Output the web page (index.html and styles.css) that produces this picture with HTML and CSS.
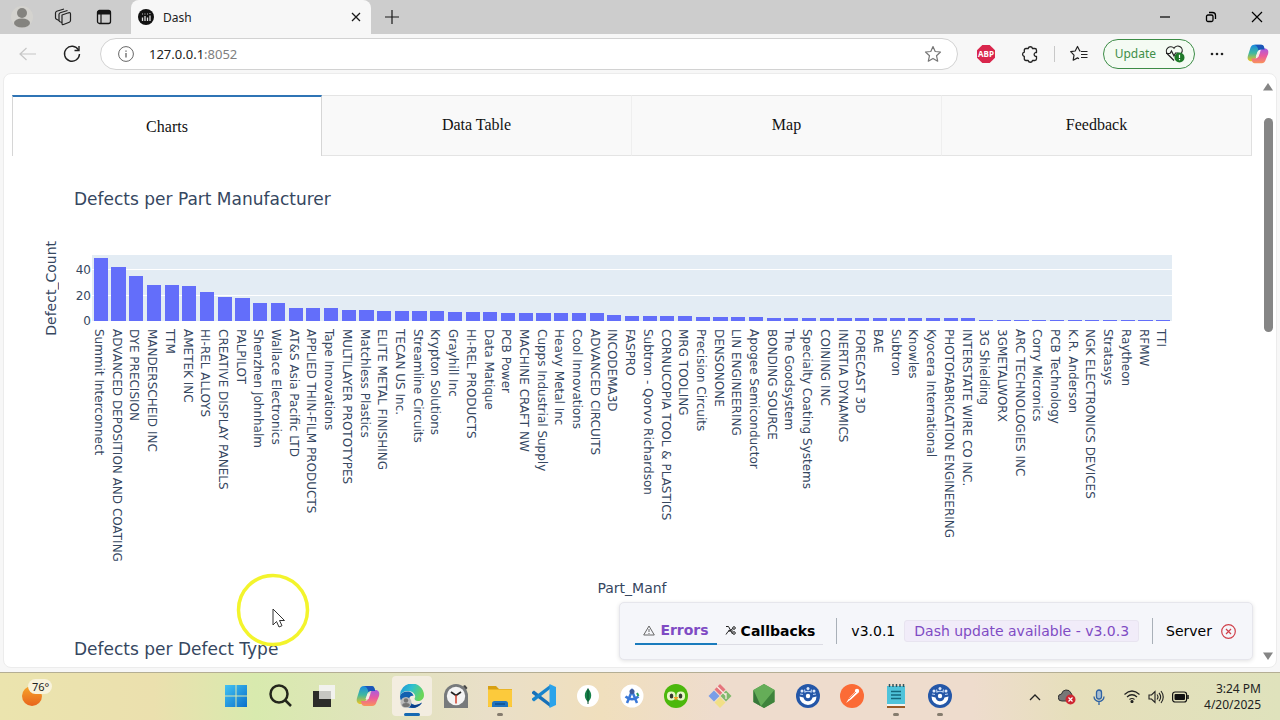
FILE: index.html
```html
<!DOCTYPE html>
<html lang="en">
<head>
    <meta charset="UTF-8">
    <meta name="viewport" content="width=device-width, initial-scale=1.0">
    <title>Dash</title>
    <link rel="stylesheet" href="styles.css">
</head>
<body>
    <svg class="defs" aria-hidden="true">
        <linearGradient id="cpA" x1="0" y1="0" x2="0" y2="1"><stop offset="0" stop-color="#1a8be0"/><stop offset=".5" stop-color="#3fb8a0"/><stop offset="1" stop-color="#f2c51d"/></linearGradient>
        <linearGradient id="cpB" x1="0" y1="0" x2="0" y2="1"><stop offset="0" stop-color="#a85be0"/><stop offset=".5" stop-color="#ea5aa0"/><stop offset="1" stop-color="#f9935a"/></linearGradient>
        <linearGradient id="win" x1="0" y1="0" x2="1" y2="1"><stop offset="0" stop-color="#42c3f3"/><stop offset="1" stop-color="#0a6fcb"/></linearGradient>
        <linearGradient id="edge" x1="0" y1="0" x2="1" y2=".4"><stop offset="0" stop-color="#1c8fd8"/><stop offset=".5" stop-color="#2fc0cf"/><stop offset="1" stop-color="#6ad65a"/></linearGradient>
        <linearGradient id="sun" x1="0" y1="0" x2="0" y2="1"><stop offset="0" stop-color="#f6a52a"/><stop offset="1" stop-color="#e8641c"/></linearGradient>
        <symbol id="copilot" viewBox="0 0 24 24">
            <path d="M8 2h7.500c2 0 2.600 1 3.200 3l.6 2H15c-2 0-3 1-3.500 3l-2 7c-.6 2-1.500 3-3.500 3H4.500C1.500 20 0 17.500 1 14L3.500 6C4.200 3.500 5.500 2 8 2z" fill="url(#cpA)"/>
            <path d="M16 22H8.500c-2 0-2.600-1-3.200-3l-.3-2H9c2 0 3-1 3.500-3l2-5c.6-2 1.500-3 3.500-3h1.500c3 0 4.500 2.500 3.500 6l-2.500 6c-.7 2.500-2 4-4.500 4z" fill="url(#cpB)"/>
            <path d="M8 2h7.500c2 0 2.600 1 3.200 3l.5 2H15c-1 0-2 .3-2.600 1.200C12 5 10.500 2.500 8 2z" fill="#1c55b8"/>
            <path d="M11.500 9.500h3l-2 5.500h-3z" fill="#f6ece6"/>
        </symbol>
        <symbol id="wheel" viewBox="0 0 24 24">
            <circle cx="12" cy="12" r="12" fill="#2457a8"/>
            <path d="M3.500 12.500a8.500 8.500 0 0 0 17 0l-4 1a4.600 4.600 0 0 1-9 0z" fill="#fff"/>
            <circle cx="12" cy="12" r="2.200" fill="#fff"/>
            <circle cx="12" cy="4.500" r="1.500" fill="#dce8fa"/>
            <circle cx="6" cy="7" r="1.500" fill="#dce8fa"/>
            <circle cx="18" cy="7" r="1.500" fill="#dce8fa"/>
            <path d="M4 10l3 .5M20 10l-3 .5M8.500 5.500l.5 2.500q3-1.500 6 0l.5-2.500" fill="none" stroke="#b9d0f2" stroke-width="1.200"/>
        </symbol>
    </svg>

    <header class="titlebar">
        <button class="title-btn" aria-label="Profile">
            <svg width="24" height="24" viewBox="0 0 24 24"><circle cx="12" cy="12" r="11" fill="#d4d3cf"/><circle cx="12" cy="8" r="5" fill="#84837f"/><ellipse cx="12" cy="18" rx="8" ry="4.500" fill="#84837f"/></svg>
        </button>
        <button class="title-btn" aria-label="Workspaces">
            <svg width="18" height="18" viewBox="0 0 18 18" fill="none" stroke="#222" stroke-width="1.200" stroke-linejoin="round"><path d="M8 7l6.500-2.200q2-.5 2 1.200v6.500q0 1.200-1.200 1.700L9.500 16.500Q8 17 8 15.300z"/><path d="M8 14.500l-2-.8q-1-.5-1-1.500V6.500q0-1.200 1.200-1.700L13.500 2.500"/><path d="M5 12.500l-2.500-1.200q-1-.5-1-1.500V5q0-1.200 1.200-1.700L10 1"/></svg>
        </button>
        <button class="title-btn" aria-label="Tab actions">
            <svg width="16" height="16" viewBox="0 0 16 16"><rect x="1.500" y="1.500" width="13" height="13" rx="2" fill="none" stroke="#151515" stroke-width="1.300"/><path d="M1.500 2h13v3.500h-13z" fill="#151515"/><path d="M5 5v9.500" stroke="#151515" stroke-width="1.200"/></svg>
        </button>
        <div class="browser-tab">
            <svg width="16" height="16" viewBox="0 0 16 16"><circle cx="8" cy="8" r="8" fill="#111"/><path d="M4.500 12V8.500M7 12V7M9.500 12V8.500M12 12V6.500" stroke="#ddd" stroke-width="1.300"/><path d="M4 5h.9M6.500 5h.9M9 5h.9M11.500 4.500h.9" stroke="#ddd" stroke-width="1"/></svg>
            <span class="tab-name">Dash</span>
            <button class="plain" aria-label="Close tab"><svg width="10" height="10" viewBox="0 0 10 10" stroke="#1a1a1a" stroke-width="1.300"><path d="M1 1l8 8M9 1l-8 8"/></svg></button>
        </div>
        <button class="plain new-tab" aria-label="New tab"><svg width="14" height="14" viewBox="0 0 14 14" stroke="#1a1a1a" stroke-width="1.200"><path d="M7 0v14M0 7h14"/></svg></button>
        <div class="window-btns">
            <button class="plain" aria-label="Minimize"><svg width="12" height="12" viewBox="0 0 12 12" stroke="#000" stroke-width="1.200"><path d="M1 6h10"/></svg></button>
            <button class="plain" aria-label="Restore"><svg width="12" height="12" viewBox="0 0 12 12" fill="none" stroke="#000" stroke-width="1.300"><rect x="1.500" y="4" width="6.500" height="6.500" rx="1.500"/><path d="M4 1.500h3.500q3 0 3 3V8"/></svg></button>
            <button class="plain" aria-label="Close"><svg width="12" height="12" viewBox="0 0 12 12" stroke="#000" stroke-width="1.200"><path d="M1 1l10 10M11 1L1 11"/></svg></button>
        </div>
    </header>

    <nav class="toolbar">
        <button class="plain tool-back" aria-label="Back"><svg width="18" height="14" viewBox="0 0 18 14" fill="none" stroke="#c6c6c6" stroke-width="1.200"><path d="M17 7H1M7.500 1L1 7l6.500 6"/></svg></button>
        <button class="plain tool-reload" aria-label="Reload"><svg width="18" height="18" viewBox="0 0 18 18" fill="none" stroke="#222" stroke-width="1.400"><path d="M15.500 5A7.500 7.500 0 1 0 16.500 9"/><path d="M16 1v4.500h-4.500"/></svg></button>
        <div class="address">
            <svg width="16" height="16" viewBox="0 0 16 16" fill="none" stroke="#666" stroke-width="1"><circle cx="8" cy="8" r="7.400"/><path d="M8 7v4.500M8 4.500v1.200" stroke-width="1.300"/></svg>
            <span class="url" role="textbox" aria-label="Address">127.0.0.1<span>:8052</span></span>
            <svg width="18" height="18" viewBox="0 0 18 18" fill="none" stroke="#777" stroke-width="1.200" stroke-linejoin="round"><path d="M9 1.500l2.200 5 5.300.5-4 3.700 1.200 5.500L9 13.400l-4.700 2.800 1.200-5.500-4-3.700 5.300-.5z"/></svg>
        </div>
        <button class="plain abp" aria-label="Adblock Plus"><svg width="18" height="18" viewBox="0 0 18 18"><path d="M5.300 0h7.400L18 5.300v7.400L12.700 18H5.300L0 12.700V5.300z" fill="#d9264c"/><text x="9" y="12" text-anchor="middle" class="abp-text">ABP</text></svg></button>
        <button class="plain puzzle" aria-label="Extensions"><svg width="18" height="18" viewBox="0 0 18 18" fill="none" stroke="#222" stroke-width="1.300" stroke-linejoin="round"><path d="M5 3.500h2.200a2.200 2.200 0 0 1 4.300 0h2.300q1.700 0 1.700 1.700v2.300h-1a2 2 0 0 0 0 3.800h1v2.500q0 1.700-1.700 1.700h-2.300a2.200 2.200 0 0 1-4.300 0H5q-1.700 0-1.700-1.700v-2.300a2.200 2.200 0 0 1 0-4.300V5.200Q3.300 3.500 5 3.500z"/></svg></button>
        <span class="tool-sep"></span>
        <button class="plain favs" aria-label="Favorites"><svg width="18" height="18" viewBox="0 0 18 18" fill="none" stroke="#222" stroke-width="1.200" stroke-linejoin="round"><path d="M10.500 6.200L9.800 6 7.500 1.500 5.200 6l-4.500.7L4 10.200l-.8 5 4.300-2.300 1.500.8M11 6.500h6.500M11 9.500h6.500M11 12.500h6.500"/></svg></button>
        <button class="update">Update
            <svg width="20" height="18" viewBox="0 0 20 18" fill="none" stroke="#222" stroke-width="1.200"><path d="M9 15.500L2.500 9A4.300 4.300 0 0 1 9 3.200 4.300 4.300 0 0 1 16.500 8"/><path d="M1 8.500h4l1.500-2.500L9 11l1.500-3h3"/><circle cx="14.500" cy="12.500" r="5" fill="#1e7a28" stroke="none"/><path d="M14.500 9.700v3.200M14.500 14v1.300" stroke="#fff"/></svg>
        </button>
        <button class="plain dots" aria-label="More"><svg width="14" height="4" viewBox="0 0 14 4" fill="#222"><circle cx="2" cy="2" r="1.300"/><circle cx="7" cy="2" r="1.300"/><circle cx="12" cy="2" r="1.300"/></svg></button>
        <button class="plain" aria-label="Copilot"><svg width="22" height="22"><use href="#copilot"/></svg></button>
    </nav>

    <div class="viewport">
        <main class="page">
            <div class="tabs" role="tablist">
                <button class="tab selected" role="tab">Charts</button>
                <button class="tab" role="tab">Data Table</button>
                <button class="tab" role="tab">Map</button>
                <button class="tab" role="tab">Feedback</button>
            </div>

            <section class="graph">
                <h2>Defects per Part Manufacturer</h2>
                <div class="chart">
                    <div class="y-title">Defect_Count</div>
                    <div class="y-ticks"><span>40</span><span>20</span><span>0</span></div>
                    <div class="bars" id="bars"></div>
                    <div class="labels" id="labels"></div>
                </div>
                <div class="x-title">Part_Manf</div>
            </section>

            <section class="graph">
                <h2>Defects per Defect Type</h2>
            </section>
        </main>

        <div class="scrollbar">
            <svg width="10" height="8" viewBox="0 0 10 8"><path d="M5 0l5 7.500H0z" fill="#858585"/></svg>
            <div class="thumb"></div>
            <svg width="10" height="8" viewBox="0 0 10 8"><path d="M5 8L0 .5h10z" fill="#858585"/></svg>
        </div>

        <div class="debug-menu">
            <button class="debug-tab active">
                <svg width="12" height="11" viewBox="0 0 12 11" fill="none" stroke="#666" stroke-width="1"><path d="M6 1l5.300 9H.7z"/><path d="M6 4v3M6 8v1"/></svg>
                Errors
            </button>
            <button class="debug-tab">
                <svg width="11" height="11" viewBox="0 0 11 11" fill="none" stroke="#222" stroke-width="1"><path d="M1 1.500h2.500L7.500 9M1 9.500l2-3 5-3"/><circle cx="9" cy="3" r="1.300"/><circle cx="9" cy="8" r="1.300"/><path d="M3 6h5"/></svg>
                Callbacks
            </button>
            <span class="debug-sep"></span>
            <span class="version">v3.0.1</span>
            <a class="upgrade" href="#">Dash update available - v3.0.3</a>
            <span class="debug-sep"></span>
            <span class="server">Server</span>
            <svg width="15" height="15" viewBox="0 0 15 15" fill="none" stroke="#d0404a" stroke-width="1.200"><circle cx="7.500" cy="7.500" r="6.800"/><path d="M5 5l5 5M10 5l-5 5"/></svg>
        </div>
    </div>

    <footer class="taskbar">
        <div class="weather">
            <svg width="20" height="20" viewBox="0 0 20 20"><circle cx="10" cy="10" r="10" fill="url(#sun)"/></svg>
            <span>76°</span>
        </div>
        <div class="apps">
            <button aria-label="Start"><svg width="24" height="24" viewBox="0 0 24 24" fill="url(#win)"><path d="M1 1h10.500v10.500H1zM12.500 1H23v10.500H12.500zM1 12.500h10.500V23H1zM12.500 12.500H23V23H12.500z"/></svg></button>
            <button aria-label="Search"><svg width="24" height="24" viewBox="0 0 24 24" fill="none" stroke="#23261c" stroke-width="2.500"><circle cx="11" cy="10" r="8.500"/><path d="M17 16l6 6"/></svg></button>
            <button aria-label="Task view"><svg width="24" height="24" viewBox="0 0 24 24"><path d="M1 7h18v16H1z" fill="#2c2c2a"/><path d="M7 1h16v14H7z" fill="#f2f2ee"/><path d="M7 7h12v8H7z" fill="#c6c6c2"/></svg></button>
            <button aria-label="Copilot"><svg width="24" height="24"><use href="#copilot"/></svg></button>
            <button class="current" aria-label="Edge"><svg width="24" height="24" viewBox="0 0 24 24"><path d="M0 12A12 12 0 0 1 24 11c0 4-3 6-6 6-3.500 0-4-2-3-3.500C16 11 13 7 8 7 4 7 1 9 0 12z" fill="url(#edge)"/><path d="M0 12c1-3 4-4.500 7-4.500 4 0 6 2 6.500 4.500C9 11 8 16 11 19c3 3 8 2.500 11-.5C20 22 16 24 12 24 5 24 0 18.500 0 12z" fill="#1260b0"/><path d="M11 11.500c-5 2-3 8 1 9 3 1 7 0 10-2-3 5.500-9 6-12 4.500-5-3-4-10 1-11.500z" fill="#0d418c"/><circle cx="6" cy="18.500" r="5.500" fill="#bbb"/><circle cx="6" cy="16.500" r="2.200" fill="#747474"/><ellipse cx="6" cy="21" rx="3.800" ry="2" fill="#747474"/></svg></button>
            <button aria-label="Clock"><svg width="24" height="24" viewBox="0 0 24 24"><path d="M0 24V12a12 12 0 0 1 24 0v12z" fill="#777a7c"/><path d="M19 2l2-1 2.500 3-1.500 1.500z" fill="#444"/><circle cx="12" cy="12" r="9.200" fill="#f4f4f4"/><path d="M7 8l5 3.500L17 8" stroke="#222" stroke-width="1.800" fill="none"/><path d="M12 11v8.500" stroke="#d2402e" stroke-width="1.500"/></svg></button>
            <button class="running" aria-label="File Explorer"><svg width="26" height="24" viewBox="0 0 26 24"><path d="M1 2h8l3 3h13v18H1z" fill="#d8a012"/><path d="M1 5.500h24V22q0 1-1 1H2q-1 0-1-1z" fill="#fcca3c"/><path d="M5 23v-3.500q0-2.500 2.500-2.500h11q2.500 0 2.500 2.500V23z" fill="#1f73c0"/><path d="M8 20h10" stroke="#124f8c" stroke-width="1.500"/></svg></button>
            <button aria-label="Visual Studio Code"><svg width="24" height="24" viewBox="0 0 24 24"><path d="M0 8l2-1.500L18 19v4L0 9.500z" fill="#1770b8"/><path d="M0 16l2 1.500L18 5V1L0 14.500z" fill="#1884cc"/><path d="M17.500 0L24 3v18l-6.500 3z" fill="#2ba3ea"/></svg></button>
            <button aria-label="MongoDB"><svg width="24" height="24" viewBox="0 0 24 24"><circle cx="12" cy="12" r="11" fill="#fff"/><path d="M12 4.500c4.500 4.500 4 10 0 13.500-4-3.500-4.500-9 0-13.500z" fill="#17824a"/><path d="M12 4.500V20" stroke="#0a4a2c"/></svg></button>
            <button aria-label="Android Studio"><svg width="24" height="24" viewBox="0 0 24 24"><circle cx="12" cy="12" r="11.500" fill="#fff"/><path d="M7 19l5-12 5 12M5.500 12.500Q12 18 18.500 12.500" fill="none" stroke="#3978d8" stroke-width="2.500"/><circle cx="12" cy="7.500" r="2.500" fill="#3d5b9c"/><path d="M17 9l1.500 3" stroke="#2b9a5c" stroke-width="2"/></svg></button>
            <button aria-label="Duolingo"><svg width="24" height="24" viewBox="0 0 24 24"><circle cx="12" cy="12" r="12" fill="#4cb80c"/><rect x="3" y="7.500" width="8.500" height="9" rx="4" fill="#e9f7c8"/><rect x="12.500" y="7.500" width="8.500" height="9" rx="4" fill="#e9f7c8"/><ellipse cx="7.500" cy="12" rx="1.800" ry="2.600" fill="#333b30"/><ellipse cx="16.500" cy="12" rx="1.800" ry="2.600" fill="#333b30"/><path d="M9.500 13h5L12 16.500z" fill="#f39a22"/></svg></button>
            <button aria-label="Git"><svg width="24" height="24" viewBox="0 0 24 24"><path d="M12 0l5.500 5.500L12 11 6.500 5.500z" fill="#e5747c"/><path d="M6 6.500l5.500 5.500L6 17.500.5 12z" fill="#799ee8"/><path d="M18 6.500l5.500 5.500-5.500 5.500-5.500-5.500z" fill="#80b96c"/><path d="M12 13l5.500 5.500L12 24l-5.500-5.500z" fill="#f1df86"/><path d="M9 2.500l9 9M18 9v6" stroke="#f7e9e0" stroke-width="1.300"/></svg></button>
            <button aria-label="Node.js"><svg width="24" height="24" viewBox="0 0 24 24"><path d="M12 0l10.500 6v12L12 24 1.500 18V6z" fill="#51994b"/><path d="M12 0l10.500 6L9 22.200 1.500 18V6z" fill="#65ad58"/><path d="M22.500 6v12L12 24l-3-1.800z" fill="#3f833c"/><path d="M1.500 6L9 22.200 1.500 18z" fill="#38763a"/></svg></button>
            <button aria-label="Cluster"><svg width="24" height="24"><use href="#wheel"/></svg></button>
            <button aria-label="Postman"><svg width="24" height="24" viewBox="0 0 24 24"><circle cx="12" cy="12" r="12" fill="#fb6b36"/><path d="M6 19l4-6 6-6 2 2-6.500 6z" fill="#fff"/><circle cx="17" cy="7" r="2.200" fill="#fff"/><path d="M9 15l7-7" stroke="#fb6b36" stroke-width=".8"/></svg></button>
            <button class="running" aria-label="Notepad"><svg width="24" height="24" viewBox="0 0 24 24"><path d="M3 2h18v19H3z" fill="#4fc3da"/><path d="M3 21h18v3H3z" fill="#9b5a25"/><path d="M3 20h18v2H3z" fill="#f4f4f0"/><path d="M5.500 0v3M9 0v3M12.500 0v3M16 0v3M19.500 0v3" stroke="#34535c" stroke-width="1.500"/><path d="M7 7.500h10M7 11h10M7 14.500h10" stroke="#14687d" stroke-width="1.300"/></svg></button>
            <button class="running" aria-label="Cluster"><svg width="24" height="24"><use href="#wheel"/></svg></button>
        </div>
        <div class="tray">
            <svg width="12" height="8" viewBox="0 0 12 8" fill="none" stroke="#222" stroke-width="1.300"><path d="M1 7l5-5 5 5"/></svg>
            <svg width="18" height="16" viewBox="0 0 18 16"><path d="M4 12a3.500 3.500 0 0 1-.5-7A5 5 0 0 1 13 4l1 2-6 6z" fill="#777" stroke="#333"/><circle cx="12.500" cy="10.500" r="5" fill="#cf2631"/><path d="M10.500 8.500l4 4M14.500 8.500l-4 4" stroke="#fff" stroke-width="1.200"/></svg>
            <svg width="12" height="16" viewBox="0 0 12 16" fill="none" stroke="#2f62a3" stroke-width="1.300"><rect x="3.500" y="1" width="5" height="9" rx="2.500" fill="#a6bdd0"/><path d="M1 7.500a5 5 0 0 0 10 0M6 12.500V16"/></svg>
            <span class="status">
                <svg width="16" height="13" viewBox="0 0 16 13" fill="none" stroke="#222" stroke-width="1.200"><path d="M.5 4.500q7.500-7 15 0M3 7q5-4.500 10 0M5.500 9.500q2.500-2 5 0"/><circle cx="8" cy="11.500" r="1" fill="#222"/></svg>
                <svg width="16" height="14" viewBox="0 0 16 14" fill="none" stroke="#222" stroke-width="1.100"><path d="M1 5v4h2.500L7 12.500v-11L3.500 5zM9 4.500q2 2.500 0 5M11 2.800q3.300 4.200 0 8.400M13 1q4.500 6 0 12"/></svg>
                <svg width="17" height="12" viewBox="0 0 17 12"><rect x=".6" y="1" width="14" height="10" rx="2.500" fill="none" stroke="#111" stroke-width="1.200"/><rect x="2.500" y="3" width="10.500" height="6" rx="1" fill="#111"/><path d="M16 4v4" stroke="#111" stroke-width="1.500"/></svg>
            </span>
            <time class="clock">3:24 PM<br>4/20/2025</time>
        </div>
    </footer>

    <svg class="pointer" width="74" height="74" viewBox="0 0 74 74" aria-hidden="true"><circle cx="37" cy="37" r="34.500" fill="none" stroke="#f3f42c" stroke-width="3.500"/><path d="M37 36v16l3.500-3.500 2.500 5.500 3-1.300-2.500-5.200h5z" fill="#fff" stroke="#333" stroke-width="1"/></svg>

    <script>
const defects = [
    ['Summit Interconnect', 49], ['ADVANCED DEPOSITION AND COATING', 42], ['DYE PRECISION', 35],
    ['MANDERSCHEID INC', 28], ['TTM', 28], ['AMETEK INC', 27], ['HI-REL ALLOYS', 23],
    ['CREATIVE DISPLAY PANELS', 19], ['PALPILOT', 18], ['Shenzhen Johnhalm', 14],
    ['Wallace Electronics', 14], ['AT&S Asia Pacific LTD', 10], ['APPLIED THIN-FILM PRODUCTS', 10],
    ['Tape Innovations', 10], ['MULTILAYER PROTOTYPES', 9], ['Matchless Plastics', 9],
    ['ELITE METAL FINISHING', 8], ['TECAN US Inc.', 8], ['Streamline Circuits', 8],
    ['Krypton Solutions', 8], ['Grayhill Inc', 7], ['HI-REL PRODUCTS', 7], ['Data Matique', 7],
    ['PCB Power', 6], ['MACHINE CRAFT NW', 6], ['Cupps Industrial Supply', 6],
    ['Heavy Metal Inc', 6], ['Cool Innovations', 6], ['ADVANCED CIRCUITS', 6], ['INCODEMA3D', 5],
    ['FASPRO', 4], ['Subtron - Qorvo Richardson', 4], ['CORNUCOPIA TOOL & PLASTICS', 4],
    ['MRG TOOLING', 4], ['Precision Circuits', 3], ['DENSONONE', 3], ['LIN ENGINEERING', 3],
    ['Apogee Semiconductor', 3], ['BONDING SOURCE', 2], ['The Goodsystem', 2],
    ['Specialty Coating Systems', 2], ['COINING INC', 2], ['INERTIA DYNAMICS', 2],
    ['FORECAST 3D', 2], ['BAE', 2], ['Subtron', 2], ['Knowles', 2], ['Kyocera International', 2],
    ['PHOTOFABRICATION ENGINEERING', 2], ['INTERSTATE WIRE CO INC.', 2], ['3G Shielding', 1],
    ['3GMETALWORX', 1], ['ARC TECHNOLOGIES INC', 1], ['Corry Micronics', 1],
    ['PCB Technology', 1], ['K.R. Anderson', 1], ['NGK ELECTRONICS DEVICES', 1],
    ['Stratasys', 1], ['Raytheon', 1], ['RFMW', 1], ['TTI', 1]
];
const yMax = 51.6;
const bars = document.getElementById('bars');
const labels = document.getElementById('labels');

defects.forEach(([name, count]) => {
    const bar = document.createElement('div');
    bar.className = 'bar';
    bar.style.height = (count / yMax * 100) + '%';
    bars.appendChild(bar);

    const label = document.createElement('span');
    label.textContent = name;
    labels.appendChild(label);
});
    </script>
</body>
</html>
```
FILE: styles.css
```css
* {
    margin: 0;
    padding: 0;
    box-sizing: border-box;
}

body {
    height: 100vh;
    display: flex;
    flex-direction: column;
    overflow: hidden;
    background: #f7f7f7;
    font-family: "Noto Sans", sans-serif;
    font-size: 12px;
    color: #222;
}

button {
    border: none;
    background: none;
    font: inherit;
    color: inherit;
}

svg {
    display: block;
    flex: none;
}

.defs {
    position: absolute;
    width: 0;
    height: 0;
}

.plain {
    display: flex;
    align-items: center;
    justify-content: center;
}

/* browser chrome */
.titlebar {
    display: flex;
    align-items: center;
    height: 34px;
    background: #cdcdcd;
    padding-left: 1px;
}

.title-btn {
    width: 41px;
    display: flex;
    justify-content: center;
}

.browser-tab {
    width: 240px;
    height: 34px;
    margin-left: 7px;
    padding: 0 10px 0 7px;
    display: flex;
    align-items: center;
    gap: 9px;
    background: #f7f7f7;
    border-radius: 8px 8px 0 0;
}

.tab-name {
    flex: 1;
}

.new-tab {
    margin-left: 14px;
}

.window-btns {
    margin-left: auto;
    margin-right: 17px;
    display: flex;
    gap: 34px;
}

.toolbar {
    display: flex;
    align-items: center;
    height: 39px;
    padding: 0 11px 0 19px;
}

.tool-reload {
    margin: 0 19px 0 26px;
}

.address {
    flex: 1;
    height: 32px;
    display: flex;
    align-items: center;
    padding: 0 15px 0 17px;
    border: 1px solid #d2d2d2;
    border-radius: 16px;
    background: #fff;
}

.url {
    flex: 1;
    margin-left: 15px;
    font-size: 13px;
}

.url span {
    color: #808080;
}

.abp {
    margin-left: 19px;
}

.abp-text {
    font: bold 8px "Open Sans", sans-serif;
    fill: #fff;
}

.puzzle {
    margin-left: 26px;
}

.tool-sep {
    width: 1px;
    height: 16px;
    margin: 0 15px;
    background: #c8c8c8;
}

.update {
    display: flex;
    align-items: center;
    gap: 9px;
    height: 30px;
    margin: 0 15px;
    padding: 0 9px 0 11px;
    border: 1px solid #3c8c46;
    border-radius: 15px;
    background: #f4fbf3;
    color: #3f8f48;
}

.dots {
    margin-right: 23px;
}

/* page area */
.viewport {
    position: relative;
    flex: 1;
    min-height: 0;
    display: flex;
    margin: 0 3px 4px;
    overflow: hidden;
    background: #fff;
    border: 1px solid #ececec;
    border-radius: 8px;
}

.page {
    flex: 1;
    min-width: 0;
    padding: 21px 8px 0;
}

.tabs {
    display: grid;
    grid-template-columns: repeat(4, 1fr);
    height: 61px;
}

.tab {
    padding-bottom: 2px;
    border: 1px solid #e4e4e4;
    border-left-width: 0;
    border-right-color: #efefef;
    background: #f9f9f9;
    font-family: "Liberation Serif", serif;
    font-size: 16px;
    color: #111;
}

.tab:last-child {
    border-right-color: #e0e0e0;
}

.tab.selected {
    padding: 1px 0 0;
    border-color: #d6d6d6;
    border-left-width: 1px;
    border-top: 2px solid #2f74b5;
    border-bottom: none;
    background: #fff;
}

.graph {
    height: 450px;
    padding: 31px 0 0 31px;
    font-family: Verdana, "DejaVu Sans", sans-serif;
    color: #36475f;
}

.graph h2 {
    margin-left: 31px;
    font-size: 17px;
    font-weight: normal;
    line-height: 24px;
}

.chart {
    display: grid;
    grid-template-columns: 16px 31px 1fr;
    grid-template-rows: 66px auto;
    column-gap: 1px;
    margin: 44px 80px 0 0;
}

.y-title {
    align-self: center;
    margin: -15px 0;
    writing-mode: vertical-rl;
    transform: rotate(180deg);
    font-size: 14px;
    line-height: 16px;
    text-align: center;
}

.y-ticks {
    display: flex;
    flex-direction: column;
    justify-content: space-between;
    height: 65px;
    margin-top: 8px;
    line-height: 14px;
    text-align: right;
}

.bars,
.labels {
    display: grid;
    grid-template-columns: repeat(61, 1fr);
}

.bars {
    align-items: end;
    background:
        linear-gradient(#fff, #fff) 0 14px / 100% 1px no-repeat,
        linear-gradient(#fff, #fff) 0 40px / 100% 1px no-repeat,
        #e3ecf4;
}

.bar {
    margin: 0 10%;
    background: #636efa;
}

.labels {
    grid-column: 3;
    min-height: 257px;
    padding-top: 8px;
}

.labels span {
    justify-self: start;
    writing-mode: vertical-rl;
    white-space: nowrap;
    line-height: 14px;
}

.x-title {
    margin-right: 31px;
    font-size: 14px;
    line-height: 20px;
    text-align: center;
}

.scrollbar {
    width: 16px;
    padding: 9px 0 7px;
    display: flex;
    flex-direction: column;
    align-items: center;
}

.thumb {
    width: 9px;
    height: 214px;
    margin: 27px 0 auto;
    border-radius: 5px;
    background: #858585;
}

/* dash dev tools */
.debug-menu {
    position: absolute;
    right: 23px;
    bottom: 7px;
    display: flex;
    align-items: center;
    height: 58px;
    padding: 0 16px 0 15px;
    border: 1px solid #e6e6ec;
    border-radius: 5px;
    background: #f5f6fa;
    box-shadow: 0 1px 4px rgba(0, 0, 0, 0.12);
    font-family: Verdana, "DejaVu Sans", sans-serif;
    font-size: 14px;
    color: #000;
}

.debug-tab {
    display: flex;
    align-items: center;
    gap: 5px;
    height: 28px;
    padding: 0 8px;
    border-bottom: 1px solid #dcdce4;
    font-weight: bold;
}

.debug-tab.active {
    border-bottom: 2px solid #1a7bbd;
    color: #7f4bc4;
}

.debug-sep {
    width: 1px;
    height: 26px;
    margin: 0 13px;
    background: #a9b0b8;
}

.upgrade {
    margin-left: 9px;
    padding: 0 9px;
    border: 1px solid #e8e4f0;
    border-radius: 3px;
    background: #f1ecf9;
    color: #7f4bc4;
    line-height: 20px;
    text-decoration: none;
}

.version {
    margin-left: 1px;
}

.server {
    margin-right: 9px;
}

/* windows taskbar */
.taskbar {
    display: flex;
    height: 48px;
    border-top: 1px solid #b4ae94;
    background: linear-gradient(90deg, #ebe4ae, #ebe0ae 12%, #d8eaae 20%, #dfe4ba 28%, #e9dfc8 38%, #f0dfbd 47%, #eedccd 56%, #eedccd 76%, #e6dfbb 84%, #dfe2bc);
}

.weather {
    position: relative;
    width: 216px;
    padding: 13px 22px;
}

.weather span {
    position: absolute;
    left: 28px;
    top: 6px;
    padding: 0 3px 0 4px;
    border-radius: 8px;
    background: #f8f3dc;
    font-size: 11px;
    line-height: 15px;
}

.apps {
    display: flex;
    gap: 4px;
    padding: 3px 0 4px;
}

.apps button {
    position: relative;
    width: 40px;
    display: flex;
    align-items: center;
    justify-content: center;
    border-radius: 4px;
}

.apps .current {
    background: #f3ede0;
}

.apps .current::after,
.apps .running::after {
    content: "";
    position: absolute;
    bottom: 0;
    width: 6px;
    height: 3px;
    border-radius: 2px;
    background: #857c6e;
}

.apps .current::after {
    width: 16px;
    background: #1669b2;
}

.tray {
    display: flex;
    align-items: center;
    gap: 17px;
    margin-left: auto;
    padding-right: 19px;
}

.status {
    display: flex;
    align-items: center;
    gap: 8px;
    margin-left: 2px;
}

.clock {
    margin-left: -2px;
    font-size: 12px;
    line-height: 16px;
    text-align: right;
}

.pointer {
    position: absolute;
    left: 236px;
    top: 573px;
}
```
